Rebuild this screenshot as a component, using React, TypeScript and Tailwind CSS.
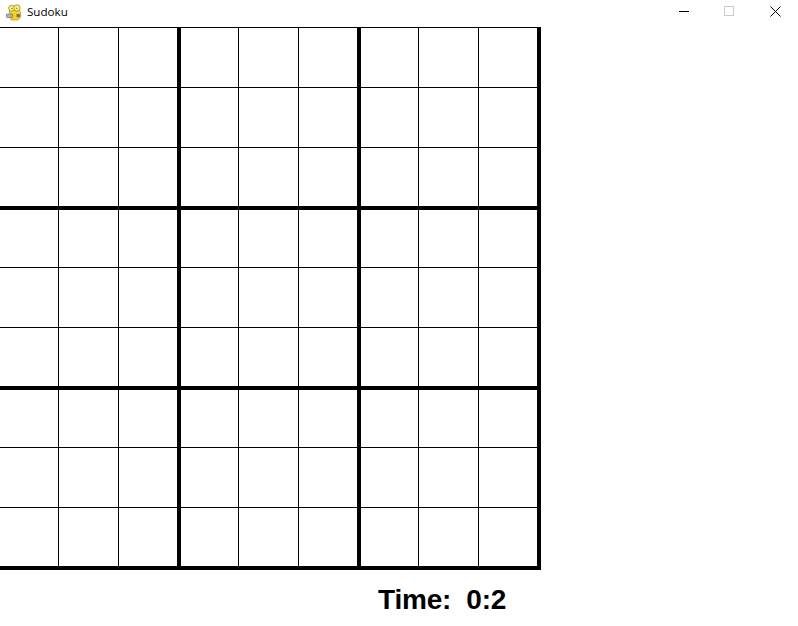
const COLS = ['w-[59px]', 'w-[60px]', 'w-[62px] border-r-4', 'w-[58px]', 'w-[60px]', 'w-[62px] border-r-4', 'w-[58px]', 'w-[60px]', 'w-[62px] border-r-4'];
const ROWS = ['h-[60px]', 'h-[60px]', 'h-[62px] border-b-4', 'h-[58px]', 'h-[60px]', 'h-[62px] border-b-4', 'h-[58px]', 'h-[60px]', 'h-[62px] border-b-4'];

const SnakeIcon = () => (
  <svg width="16" height="17" viewBox="0 0 16 17" className="shrink-0">
    <path d="M3 8 C3 6 5 5 7 6 L11 6 C14 6 15 8 14.5 10 C15 13 14 15 11.5 16 L6 16 C4 16 4.5 14 6 13 L4.5 10 Z" fill="#efd421" stroke="#b39a22" strokeWidth="0.7" />
    <circle cx="5.6" cy="4.2" r="3" fill="#f5e94a" stroke="#a3902a" strokeWidth="0.8" />
    <circle cx="11" cy="4" r="3.2" fill="#f5e94a" stroke="#a3902a" strokeWidth="0.8" />
    <circle cx="5.8" cy="4.2" r="1.7" fill="#f8f6e0" />
    <circle cx="11" cy="4" r="1.8" fill="#f8f6e0" />
    <circle cx="6" cy="4.4" r="0.8" fill="#77776a" />
    <circle cx="10.8" cy="4.2" r="0.8" fill="#77776a" />
    <rect x="0.5" y="10" width="6" height="3.6" rx="1" fill="#b5b5ae" stroke="#66665e" strokeWidth="0.7" />
    <rect x="10.5" y="10" width="3.5" height="3.2" fill="#8b6a50" />
  </svg>
);

const App = () => {
  return (
    <div className="w-[798px] h-[626px] bg-white overflow-hidden font-['Liberation_Sans',sans-serif] text-black">
      {/* title bar */}
      <div className="flex items-center h-[27px] relative pl-[6px]">
        <div className="mb-[3px]">
          <SnakeIcon />
        </div>
        <span className="ml-[5px] mb-[3px] text-[11.6px] leading-none font-['Open_Sans',sans-serif] text-[#000]">Sudoku</span>
        <div className="ml-auto flex items-center pb-[5px]">
          <div className="w-[10px] h-px bg-black mr-[35px]" />
          <div className="w-[10px] h-[10px] border border-[#cccccc] mr-[36px]" />
          <svg width="11" height="11" viewBox="0 0 11 11" className="mr-[17px]">
            <path d="M0.5 0.5 L10.5 10.5 M10.5 0.5 L0.5 10.5" stroke="#000" strokeWidth="1" fill="none" />
          </svg>
        </div>
      </div>

      {/* board */}
      <div className="w-[541px] border-t border-black">
        {ROWS.map((row, r) => (
          <div key={r} className="flex">
            {COLS.map((col, c) => (
              <div key={c} className={`${col} ${row} border-r border-b border-black`} />
            ))}
          </div>
        ))}
      </div>

      {/* timer */}
      <div className="pl-[378px] pt-[14px] text-[28px] leading-[32px] tracking-[-0.2px] font-bold whitespace-pre">Time:  0:2</div>
    </div>
  );
};

export default App;
